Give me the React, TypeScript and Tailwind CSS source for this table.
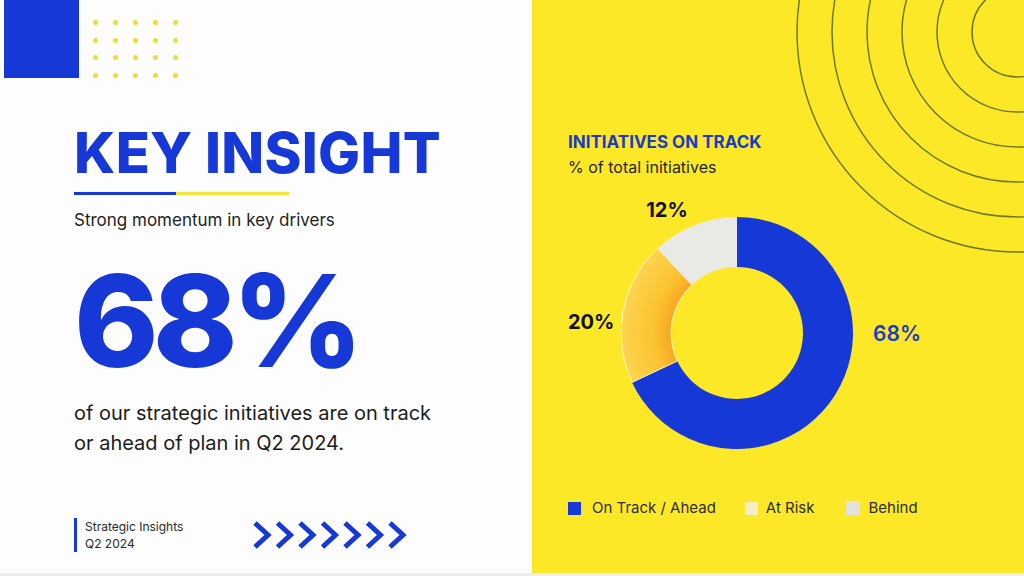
import React from "react";

const BLUE = "#1538d6";

// donut geometry (svg coords)
const CX = 169;
const CY = 138;
const R_OUT = 116;
const R_IN = 66;

function pt(deg: number, r: number) {
  const a = (deg * Math.PI) / 180;
  return [CX + r * Math.sin(a), CY - r * Math.cos(a)];
}

function segment(start: number, end: number) {
  const large = end - start > 180 ? 1 : 0;
  const [x1, y1] = pt(start, R_OUT);
  const [x2, y2] = pt(end, R_OUT);
  const [x3, y3] = pt(end, R_IN);
  const [x4, y4] = pt(start, R_IN);
  return `M${x1} ${y1} A${R_OUT} ${R_OUT} 0 ${large} 1 ${x2} ${y2} L${x3} ${y3} A${R_IN} ${R_IN} 0 ${large} 0 ${x4} ${y4} Z`;
}

function Donut() {
  return (
    <svg width="372" height="265" viewBox="0 0 372 265" className="block">
      <defs>
        <radialGradient id="risk" cx={CX} cy={CY} r={R_OUT} gradientUnits="userSpaceOnUse">
          <stop offset="0.55" stopColor="#f6a321" />
          <stop offset="0.72" stopColor="#fbc331" />
          <stop offset="1" stopColor="#fdd450" />
        </radialGradient>
      </defs>
      <path d={segment(0, 244.8)} fill={BLUE} />
      <path d={segment(244.8, 316.8)} fill="url(#risk)" stroke="#fff6d0" strokeWidth="1" />
      <path d={segment(316.8, 360)} fill="#e9e9e6" />
      <g style={{ fontFamily: "Inter, 'Liberation Sans', sans-serif" }}>
        <text x="99" y="22" textAnchor="middle" fontSize="20" fontWeight="700" fill="#111">
          12%
        </text>
        <text x="0" y="134" fontSize="20" fontWeight="700" fill="#111">
          20%
        </text>
        <text x="305" y="146" fontSize="21" fontWeight="600" fill="#1a3cc4">
          68%
        </text>
      </g>
    </svg>
  );
}

function Rings() {
  const radii = [45, 80, 115, 150, 185, 220];
  return (
    <svg
      width="492"
      height="300"
      viewBox="0 0 492 300"
      className="absolute top-0 right-0 pointer-events-none"
    >
      {radii.map((r) => (
        <circle key={r} cx="485" cy="32" r={r} fill="none" stroke="#6c7b22" strokeWidth="1.5" />
      ))}
    </svg>
  );
}

function Chevrons() {
  return (
    <svg width="160" height="30" viewBox="0 0 160 30">
      {Array.from({ length: 7 }).map((_, i) => (
        <polyline
          key={i}
          points={`${3 + i * 22.5},3 ${16 + i * 22.5},15 ${3 + i * 22.5},27`}
          fill="none"
          stroke={BLUE}
          strokeWidth="5"
        />
      ))}
    </svg>
  );
}

export default function App() {
  return (
    <div
      className="w-[1024px] h-[576px] flex flex-col overflow-hidden bg-[#ececec]"
      style={{ fontFamily: "Inter, 'Liberation Sans', sans-serif" }}
    >
      <div className="flex h-[573px]">
        {/* Left panel */}
        <div className="w-[532px] h-full bg-[#fdfdfd] flex flex-col">
          <div className="flex pl-[4px]">
            <div className="w-[75px] h-[78px] bg-[#1538d6]" />
            <div className="grid grid-cols-5 gap-x-[15px] gap-y-[12.7px] ml-[14px] mt-[20px] h-fit">
              {Array.from({ length: 20 }).map((_, i) => (
                <div key={i} className="w-[5px] h-[5px] rounded-full bg-[#f4dc2e]" />
              ))}
            </div>
          </div>

          <div className="pl-[74px] flex flex-col flex-1">
            <h1 className="mt-[47px] text-[56px] leading-none font-extrabold tracking-[0.3px] text-[#1538d6]">
              KEY INSIGHT
            </h1>
            <div className="mt-[11px] flex h-[3px]">
              <div className="w-[102px] bg-[#1538d6]" />
              <div className="w-[113px] bg-[#f6e33a]" />
            </div>
            <p className="mt-[13px] text-[17px] leading-[24px] text-[#1e1e1e]">
              Strong momentum in key drivers
            </p>
            <div className="mt-[12px] text-[128px] leading-[1.2] font-extrabold tracking-[-6px] text-[#1538d6]">
              68%
            </div>
            <p className="text-[20px] leading-[30px] text-[#1c1c1c]">
              of our strategic initiatives are on track
              <br />
              or ahead of plan in Q2 2024.
            </p>

            <div className="mt-auto mb-[21px] flex items-center">
              <div className="w-[178px] flex items-center">
                <div className="w-[3px] h-[34px] bg-[#1538d6]" />
                <div className="ml-[8px] text-[12px] leading-[17px] text-[#2a2a2a]">
                  <div>Strategic Insights</div>
                  <div>Q2 2024</div>
                </div>
              </div>
              <Chevrons />
            </div>
          </div>
        </div>

        {/* Right panel */}
        <div className="relative flex-1 h-full bg-[#fce827] overflow-hidden">
          <Rings />
          <div className="relative pl-[36px] pt-[130px] flex flex-col">
            <h2 className="text-[17px] leading-[24px] font-bold text-[#1a3cc4]">
              INITIATIVES ON TRACK
            </h2>
            <p className="mt-[1px] text-[16px] leading-[24px] text-[#262626]">% of total initiatives</p>
            <div className="mt-[16px]">
              <Donut />
            </div>
            <div className="mt-[38px] flex items-center text-[15px] leading-[20px] text-[#2e2e2e]">
              <div className="w-[13px] h-[13px] bg-[#1538d6]" />
              <span className="ml-[11px]">On Track / Ahead</span>
              <div className="ml-[29px] w-[13px] h-[13px] bg-[#f5eec4]" />
              <span className="ml-[8px]">At Risk</span>
              <div className="ml-[32px] w-[14px] h-[14px] bg-[#e2e2e0]" />
              <span className="ml-[8px]">Behind</span>
            </div>
          </div>
        </div>
      </div>
    </div>
  );
}
